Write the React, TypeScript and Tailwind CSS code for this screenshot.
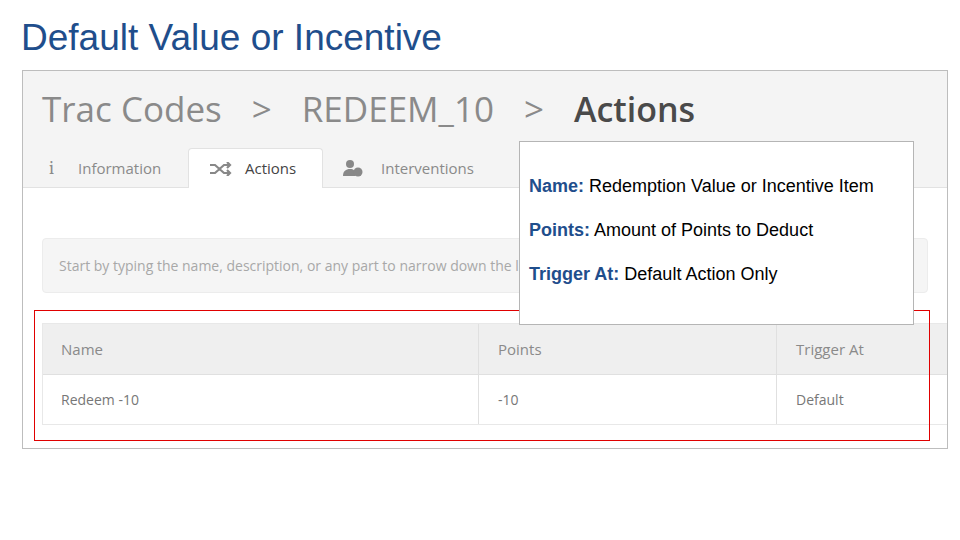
export default function App() {
  const os = { fontFamily: '"Open Sans", sans-serif' };
  return (
    <div className="relative w-[960px] h-[540px] bg-white overflow-hidden" style={{ fontFamily: '"Liberation Sans", Arial, sans-serif' }}>
      <h1 className="absolute left-[21px] top-[16px] text-[37px] leading-[44px] text-[#1f4e8c]">Default Value or Incentive</h1>
      <div className="absolute left-[22px] top-[70px] w-[926px] h-[379px] border border-[#bdbdbd] overflow-hidden bg-white" style={os}>
        <div className="bg-[#f4f4f4] border-b border-[#e2e2e2] h-[117px] flex flex-col">
          <div className="flex items-center h-[78px] pl-[19px] text-[35px] text-[#8a8a8a] gap-[30px]">
            <span>Trac Codes</span><span>&gt;</span><span>REDEEM_10</span><span>&gt;</span>
            <span className="text-[#4a4a4a] font-semibold text-[34px]">Actions</span>
          </div>
          <div className="flex items-end h-[39px] text-[15px] text-[#8a8a8a]">
            <div className="flex items-center gap-[24px] pl-[26px] w-[165px] h-[38px]"><span className="font-serif text-[18px]">i</span>Information</div>
            <div className="flex items-center gap-[12px] pl-[20px] w-[135px] h-[40px] bg-white border border-b-0 border-[#e2e2e2] rounded-t text-[#444] -mb-px">
              <svg width="24" height="14" viewBox="0 0 24 14" fill="none" stroke="#888" strokeWidth="2.2"><path d="M1 3h5l9 8h6M1 11h5l9-8h6M18 0l3 3-3 3M18 8l3 3-3 3"/></svg>Actions</div>
            <div className="flex items-center gap-[14px] pl-[18px] h-[38px]">
              <svg width="26" height="18" viewBox="0 0 26 18" fill="#888"><circle cx="9" cy="5" r="4"/><path d="M2 17c0-5 3-7 7-7s5 2 5 4v3z"/><circle cx="17" cy="13" r="4.5"/></svg>Interventions</div>
          </div>
        </div>
        <div className="px-[19px] pt-[50px]">
          <div className="h-[55px] bg-[#f5f5f5] border border-[#ececec] rounded flex items-center pl-[16px] text-[14px] text-[#a8a8a8]">Start by typing the name, description, or any part to narrow down the list</div>
          <div className="mt-[30px] w-[1000px] border border-[#e8e8e8] text-[15px]">
            <div className="flex h-[51px] bg-[#efefef] text-[#8a8a8a] border-b border-[#e0e0e0]">
              <div className="w-[436px] pl-[18px] flex items-center border-r border-[#e0e0e0]">Name</div>
              <div className="w-[298px] pl-[19px] flex items-center border-r border-[#e0e0e0]">Points</div>
              <div className="pl-[19px] flex items-center">Trigger At</div>
            </div>
            <div className="flex h-[49px] text-[#777] text-[14px]">
              <div className="w-[436px] pl-[18px] flex items-center border-r border-[#e0e0e0]">Redeem -10</div>
              <div className="w-[298px] pl-[19px] flex items-center border-r border-[#e0e0e0]">-10</div>
              <div className="pl-[19px] flex items-center">Default</div>
            </div>
          </div>
        </div>
      </div>
      <div className="absolute left-[34px] top-[310px] w-[896px] h-[131px] border border-[#e00000]" />
      <div className="absolute left-[519px] top-[141px] w-[395px] h-[184px] bg-white border border-[#b5b5b5] pl-[9px] pt-[33px] text-[18px] text-black flex flex-col gap-[22px] leading-[22px]">
        <div><b className="text-[#1f4e8c]">Name:</b> Redemption Value or Incentive Item</div>
        <div><b className="text-[#1f4e8c]">Points:</b> Amount of Points to Deduct</div>
        <div><b className="text-[#1f4e8c]">Trigger At:</b> Default Action Only</div>
      </div>
    </div>
  );
}
